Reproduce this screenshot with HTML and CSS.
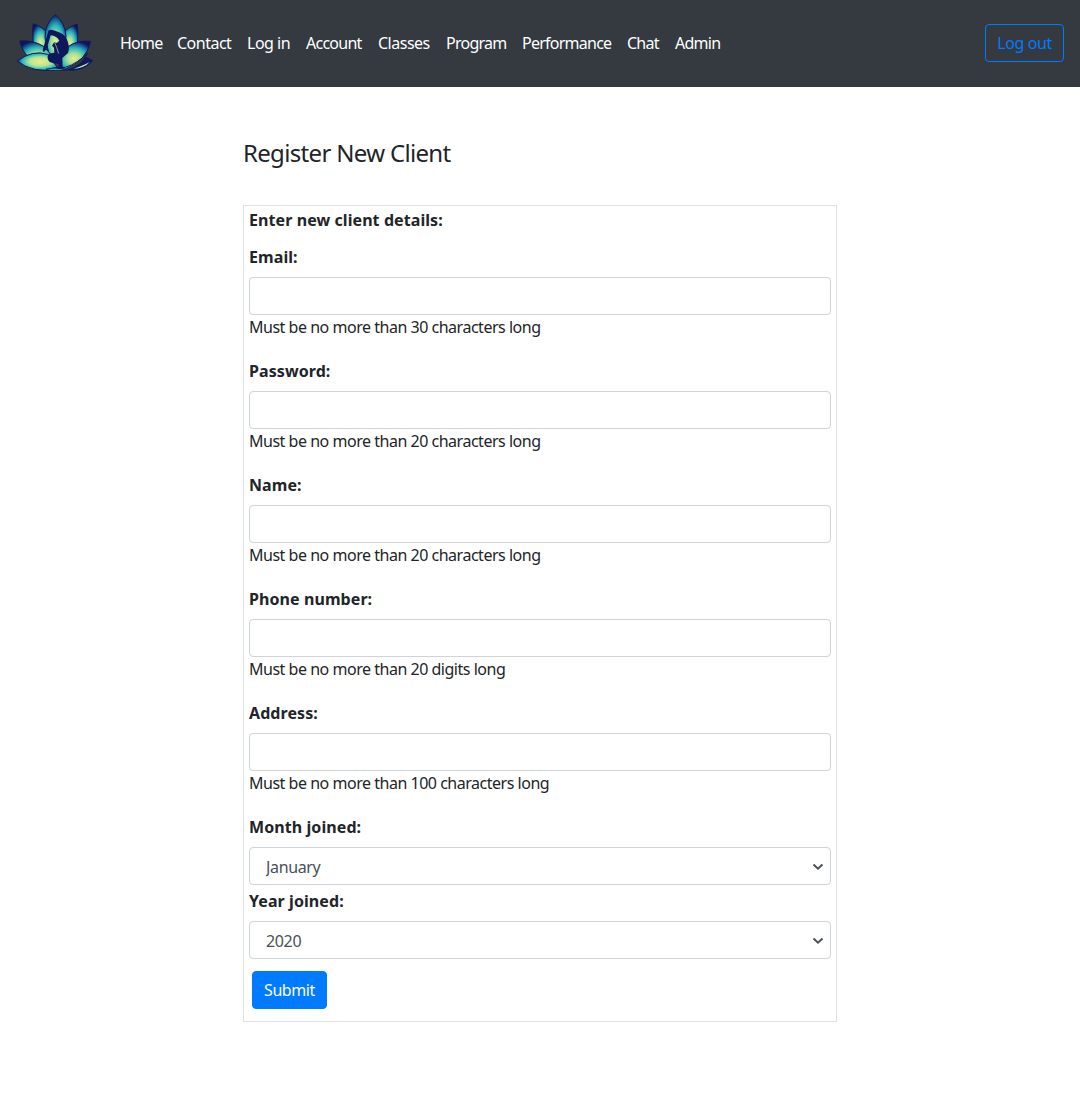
FILE: index.html
```html
<!DOCTYPE html>
<html lang="en">
<head>
<meta charset="utf-8">
<title>Register New Client</title>
<link rel="stylesheet" href="styles.css">
</head>
<body>
<nav class="navbar">
  <svg class="logo" viewBox="0 0 270 210" role="img" aria-label="Yoga lotus">
    <defs>
      <radialGradient id="petal" cx=".5" cy=".62" r=".62"><stop offset="0" stop-color="#f0ec82"/><stop offset=".3" stop-color="#a5e19a"/><stop offset=".62" stop-color="#2ab5bb"/><stop offset=".88" stop-color="#124a8c"/><stop offset="1" stop-color="#10145c"/></radialGradient>
      <radialGradient id="base" cx=".55" cy=".5" r=".58"><stop offset="0" stop-color="#f2ed80"/><stop offset=".45" stop-color="#b5e594"/><stop offset=".75" stop-color="#28b8bd"/><stop offset="1" stop-color="#10195f"/></radialGradient>
    </defs>
    <g stroke="#10185d" stroke-width="3" stroke-linejoin="round">
      <path fill="url(#petal)" d="M69 47Q98 56 116 78L110 145H78Q65 100 69 47Z"/>
      <path fill="url(#petal)" d="M202 48Q173 57 155 80L165 145H193Q208 100 202 48Z"/>
      <path fill="url(#petal)" d="M136 20Q103 49 105 90L122 155H155L168 85Q166 45 136 20Z"/>
      <path fill="url(#petal)" d="M29 99Q70 96 101 115L137 155L108 180Q42 158 29 99Z"/>
      <path fill="url(#petal)" d="M242 100Q201 96 174 116L141 160L165 184Q230 158 242 100Z"/>
      <path fill="url(#base)" d="M22 159Q68 124 113 139L146 184Q67 197 22 159Z"/>
      <path fill="#10195f" d="M248 158Q235 150 226 148Q213 174 176 186Q220 190 248 158Z"/>
      <path fill="url(#base)" d="M178 185Q213 178 243 159Q221 184 178 185Z" stroke="none"/>
      <path fill="none" d="M108 184Q141 176 166 178Q204 166 232 135Q218 176 170 187Z"/>
      <path fill="#25a9b5" stroke="none" d="M108 186Q138 178 160 186Z"/>
    </g>
    <path fill="#10185d" d="M101 133L98 126L109 90L115 68Q120 63 135 68Q162 75 170 92Q181 117 174 135L157 150L158 182L143 183L147 168Q132 168 119 162Q108 150 116 137L133 134L132 119L126 113L132 103L140 105L148 98Q141 84 122 82L110 123Z"/>
    <path fill="none" stroke="#b6e493" stroke-width="2" d="M134 104L140 118L146 137"/>
  </svg>
  <div class="nav-links">
    <a>Home</a><a>Contact</a><a>Log in</a><a>Account</a><a>Classes</a><a>Program</a><a>Performance</a><a>Chat</a><a>Admin</a>
  </div>
  <button class="btn btn-outline" type="button">Log out</button>
</nav>
<main class="content">
  <h1 class="title">Register New Client</h1>
  <form class="panel">
    <p class="intro">Enter new client details:</p>
    <div class="field"><label for="email">Email:</label><input id="email"><small>Must be no more than 30 characters long</small></div>
    <div class="field"><label for="password">Password:</label><input id="password" type="password"><small>Must be no more than 20 characters long</small></div>
    <div class="field"><label for="name">Name:</label><input id="name"><small>Must be no more than 20 characters long</small></div>
    <div class="field"><label for="phone">Phone number:</label><input id="phone"><small>Must be no more than 20 digits long</small></div>
    <div class="field"><label for="address">Address:</label><input id="address"><small>Must be no more than 100 characters long</small></div>
    <div class="field compact"><label for="month">Month joined:</label><select id="month"><option>January</option></select></div>
    <div class="field compact"><label for="year">Year joined:</label><select id="year"><option>2020</option></select></div>
    <button class="btn btn-primary" type="button">Submit</button>
  </form>
</main>
</body>
</html>
```
FILE: styles.css
```css
* { box-sizing: border-box; }
body { margin: 0; background: #fff; color: #212529; font: 16px/24px Tahoma, "Noto Sans", sans-serif; letter-spacing: -0.48px; }
.navbar { display: flex; align-items: center; height: 87px; padding: 0 16px 1px 10px; background: #343a40; }
.logo { width: 90px; height: 70px; flex: none; }
.nav-links { display: grid; grid-template-columns: 57px 70px 59px 72px 68px 76px 105px 48px 60px; margin-left: 20px; color: #fff; letter-spacing: -0.75px; white-space: nowrap; }
.nav-links a:nth-child(2), .nav-links a:nth-child(3), .nav-links a:nth-child(5) { letter-spacing: -0.5px; }
.btn { height: 38px; padding: 0; border: 1px solid #007bff; border-radius: 4px; font: inherit; letter-spacing: -0.4px; }
.btn-outline { width: 79px; margin-left: auto; background: transparent; color: #007bff; }
.btn-primary { display: block; width: 75px; margin: 12px 0 0 3px; background: #007bff; color: #fff; }
.content { width: 594px; margin: 0 auto; padding-top: 48px; }
.title { margin: 0; font-size: 24px; line-height: 36px; font-weight: 400; letter-spacing: -0.67px; }
.panel { height: 817px; margin-top: 34px; padding: 2px 5px; border: 1px solid #dee2e6; }
.intro { margin: 0 0 13px; font-weight: 700; }
.field { display: flex; flex-direction: column; margin-bottom: 20px; }
.compact { margin-bottom: 4px; }
label { margin-bottom: 8px; font-weight: 700; }
.intro, label { letter-spacing: 0.08px; }
small { font-size: 16px; }
input, select { width: 100%; height: 38px; padding: 6px 12px; border: 1px solid #ced4da; border-radius: 4px; background: #fff; color: #495057; font: inherit; letter-spacing: -0.35px; }
select {
  appearance: none;
  padding: 7px 16px 5px;
  background: #fff url("data:image/svg+xml,%3Csvg xmlns='http://www.w3.org/2000/svg' width='12' height='8'%3E%3Cpath d='M1.5 1.5L6 5.7L10.5 1.5' fill='none' stroke='%23495057' stroke-width='2'/%3E%3C/svg%3E") no-repeat right 6px top 15px;
}
```
